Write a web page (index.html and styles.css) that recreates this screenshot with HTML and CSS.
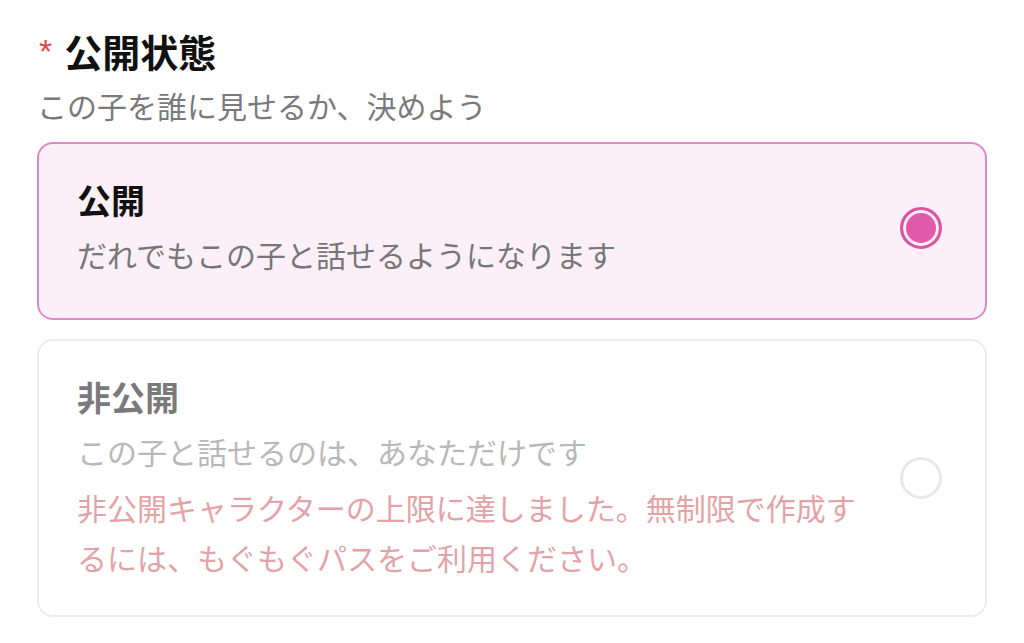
FILE: index.html
```html
<!DOCTYPE html>
<html lang="ja">
<head>
  <meta charset="UTF-8">
  <meta name="viewport" content="width=device-width, initial-scale=1.0">
  <title>公開状態</title>
  <link rel="stylesheet" href="styles.css">
</head>
<body>
  <div class="field">
    <!-- Section heading -->
    <h2 class="field-title"><span class="required">*</span>公開状態</h2>
    <p class="field-hint">この子を誰に見せるか、決めよう</p>

    <!-- Options -->
    <div class="options">
      <label class="option option-selected">
        <div class="option-body">
          <span class="option-title">公開</span>
          <span class="option-desc">だれでもこの子と話せるようになります</span>
        </div>
        <span class="radio radio-on"></span>
      </label>

      <label class="option option-disabled">
        <div class="option-body">
          <span class="option-title">非公開</span>
          <span class="option-desc">この子と話せるのは、あなただけです</span>
          <span class="option-warn">非公開キャラクターの上限に達しました。無制限で作成するには、もぐもぐパスをご利用ください。</span>
        </div>
        <span class="radio"></span>
      </label>
    </div>
  </div>
</body>
</html>
```

FILE: styles.css
```css
/* Reset */
body, h2, p {
  margin: 0;
  padding: 0;
}

body {
  font-family: 'Noto Sans CJK JP', 'Noto Sans', sans-serif;
  background: #fff;
  color: #111;
  padding: 25px 37px 0;
}

/* Heading */
.field-title {
  display: flex;
  align-items: flex-start;
  font-size: 38px;
  line-height: 52px;
  font-weight: 700;
  color: #111;
}

.required {
  color: #e5484d;
  font-family: 'Liberation Sans', sans-serif;
  font-size: 34px;
  line-height: 52px;
  font-weight: 400;
  margin: 0 12px 0 2px;
}

.field-hint {
  margin-top: 3px;
  font-size: 30px;
  line-height: 50px;
  color: #7a7a7a;
}

/* Option cards */
.options {
  display: flex;
  flex-direction: column;
  gap: 19px;
  margin-top: 12px;
}

.option {
  display: flex;
  align-items: center;
  justify-content: space-between;
  border: 2px solid #ececec;
  border-radius: 16px;
  padding: 33px 43px 33px 38px;
  background: #fff;
}

.option-selected {
  border-color: #e188c8;
  background: #fcf0f8;
  padding-bottom: 39px;
}

.option-body {
  display: flex;
  flex-direction: column;
  gap: 6px;
  max-width: 800px;
}

.option-title {
  font-size: 34px;
  line-height: 46px;
  font-weight: 700;
  color: #111;
}

.option-desc {
  font-size: 30px;
  line-height: 50px;
  color: #777;
}

.option-warn {
  font-size: 30px;
  line-height: 50px;
  color: #e3a3a6;
}

.option-disabled .option-title {
  color: #7a7a7a;
}

.option-disabled .option-desc {
  color: #b8b8b8;
}

/* Radio */
.radio {
  flex: none;
  width: 42px;
  height: 42px;
  box-sizing: border-box;
  border: 3px solid #e8e8e8;
  border-radius: 50%;
  background: #fff;
}

.radio-on {
  border-color: #d9569f;
  background: #e15aaa;
  box-shadow: inset 0 0 0 3px #fdeef6;
}
```
